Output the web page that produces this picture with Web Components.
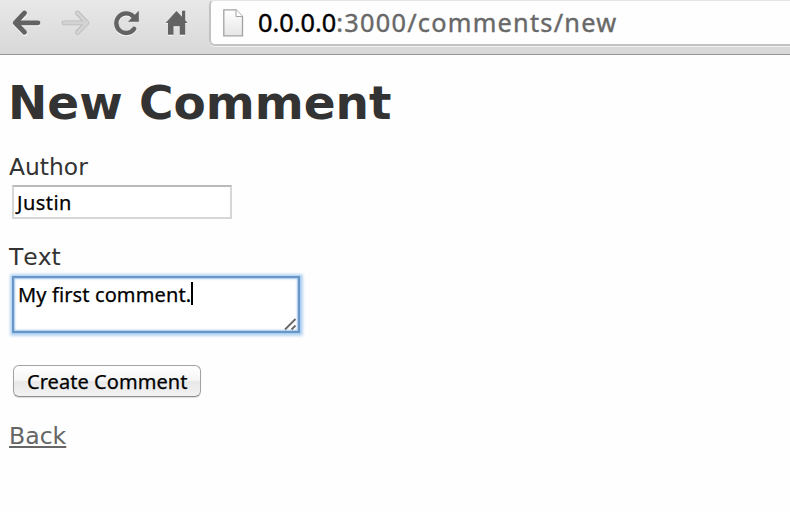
<!DOCTYPE html>
<html lang="en"><head><meta charset="utf-8"><title>New Comment</title>
<style>html,body{margin:0;background:#fefefe;height:512px;overflow:hidden}</style></head>
<body><browser-window></browser-window>
<script>
const define=(name,html)=>customElements.define(name,class extends HTMLElement{
  constructor(){super();this.attachShadow({mode:'open'}).innerHTML=html;}
});
define('nav-icons',`<style>:host{display:block;width:209px;height:54px;flex:none}svg{display:block}</style>
<svg width="209" height="54" viewBox="0 0 209 54" fill="none">
<g stroke-linecap="round" stroke-linejoin="round">
<path d="M24.8 13.2L15.2 22.8L24.8 32.4M16 22.8H38" stroke="#fafafa" stroke-width="5" transform="translate(0 1)"/>
<path d="M24.5 13L15.2 22.8L24.5 32.3M16 22.8H38" stroke="#636363" stroke-width="4.8"/>
<path d="M77.5 13L87 22.8L77.5 32.3M64 22.8H86" stroke="#b9b9b9" stroke-width="4.8"/>
<path d="M77.5 13L87 22.8L77.5 32.3M64 22.8H86" stroke="#d3d3d3" stroke-width="3.2"/>
<path d="M133.2 16.4A9.8 9.8 0 1 0 134.2 28.8" stroke="#fafafa" stroke-width="4.4" transform="translate(0 1)"/>
<path d="M133.2 16.4A9.8 9.8 0 1 0 134.2 28.8" stroke="#636363" stroke-width="4.4"/></g>
<path d="M138.8 10.8V21.8H128Z" fill="#636363"/>
<path d="M165.6 24L176.5 12L182 17.8V11.8H185.2V21.3L187.6 24H185.2V35.8H179.7V27.2H173.5V35.8H168V24Z" fill="#fafafa"/>
<path d="M165.6 23L176.5 11L182 16.8V10.8H185.2V20.3L187.6 23H185.2V34.8H179.7V26.2H173.5V34.8H168V23Z" fill="#636363"/>
</svg>`);
define('address-bar',`<style>:host{display:flex;box-sizing:border-box;flex:1;height:47px;margin-top:-1px;border:2px solid #c2c2c2;border-top-color:#e4e4e4;border-right:0;border-radius:6px 0 0 6px;background:#fefefe;box-shadow:0 1px 0 #f0f0f0;font:25.3px/34px "Noto Sans","Open Sans",sans-serif;color:#686868;white-space:pre}
svg{flex:none;margin:8px 0 0 12px}.u{margin:4px 0 0 14px;-webkit-text-stroke:.4px}.h{color:#000}.p{letter-spacing:1.25px}</style>
<svg width="21" height="28" viewBox="0 0 21 28"><defs><linearGradient id="p" x2="0" y2="1"><stop stop-color="#fff"/><stop offset="1" stop-color="#e6e6e6"/></linearGradient></defs><path d="M.8.8H13L19.5 7.5V26.8H.8Z" fill="url(#p)" stroke="#a2a2a2" stroke-width="1.3"/><path d="M13 .8V7.5H19.5" fill="#fff" stroke="#a2a2a2"/></svg>
<div class="u"><span class="h">0.0.0.0</span><span class="p">:3000/comments/new</span></div>`);
define('browser-toolbar',`<style>:host{display:flex;box-sizing:border-box;height:55px;align-items:flex-start;background:linear-gradient(#e8e8e8,#d8d8d8);border-bottom:1px solid #979797}</style><nav-icons></nav-icons><address-bar></address-bar>`);
define('text-input',`<style>:host{display:block;box-sizing:border-box;width:220px;height:34px;margin:3px 0 0 3px;border:2px solid #d6d6d6;border-top-color:#b9b9b9;background:#fff;font:20px/32px "Noto Sans","Open Sans",sans-serif;color:#000;padding-left:3px;letter-spacing:.45px;-webkit-text-stroke:.25px}</style><slot></slot>`);
define('text-box',`<style>:host{display:flex;position:relative;box-sizing:border-box;width:288px;height:57px;margin:4px 0 0 3px;border:2px solid #6797c7;background:#fff;box-shadow:0 0 3px 2.5px #a3c8ee,inset 0 0 2px 1px #9fc4ea;font:20px/33px "Noto Sans","Open Sans",sans-serif;color:#000;padding-left:4px;letter-spacing:.12px;-webkit-text-stroke:.25px}i{width:2px;height:23px;background:#000;margin-top:4px}svg{position:absolute;right:0;bottom:0}</style>
<span><slot></slot></span><i></i><svg width="15" height="15"><path d="M2 13.5L12.5 3M8.5 13.5L12.5 9.5" stroke="#666" stroke-width="1.8"/></svg>`);
define('push-button',`<style>:host{display:block;box-sizing:border-box;width:188px;height:32px;margin-left:13px;border:1.5px solid #a2a2a2;border-bottom-color:#8e8e8e;border-radius:6px;background:linear-gradient(#fff,#f5f5f5 48%,#e8e8e8 52%,#f2f2f2);box-shadow:0 1px 1px #ddd;font:20px/31px "Noto Sans","Open Sans",sans-serif;color:#000;padding-left:13px;letter-spacing:.05px;white-space:nowrap;-webkit-text-stroke:.25px}</style><slot></slot>`);
define('form-field',`<style>:host{display:block;margin-left:9px;font:23.4px/30px "DejaVu Sans",sans-serif;font-kerning:none;color:#333}.l{height:30px}</style><div class="l"><span><slot name="label"></slot></span></div><slot></slot>`);
define('page-heading',`<style>:host{display:block;height:78px;margin-left:8px;font:bold 47px/58px "DejaVu Sans",sans-serif;color:#333}</style><span><slot></slot></span>`);
define('back-link',`<style>:host{display:block;margin:24px 0 0 9px;font:23.6px/30px "DejaVu Sans",sans-serif;color:#666}a{color:inherit;text-decoration:underline;text-decoration-thickness:2px;text-underline-offset:2px}</style><a href="#"><slot></slot></a>`);
define('comment-page',`<style>:host{display:block;padding-top:19px}.two{margin-top:23px}push-button{margin-top:32px}</style>
<page-heading>New Comment</page-heading>
<form-field><span slot="label">Author</span><text-input>Justin</text-input></form-field>
<form-field class="two"><span slot="label">Text</span><text-box>My first comment.</text-box></form-field>
<push-button>Create Comment</push-button><back-link>Back</back-link>`);
define('browser-window',`<style>:host{display:block}</style><browser-toolbar></browser-toolbar><comment-page></comment-page>`);
</script></body></html>
